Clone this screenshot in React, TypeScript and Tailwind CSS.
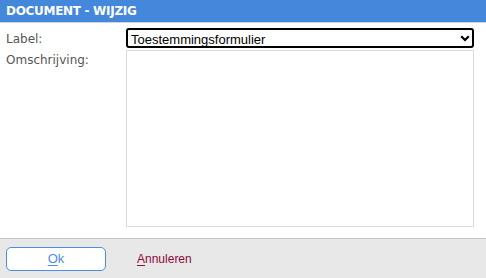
import { useState } from "react"

const App = () => {
    const [label, setLabel] = useState("Toestemmingsformulier")
    const [text, setText] = useState("")

    return (
        <main className="w-[486px] h-[278px] bg-white flex flex-col overflow-hidden">
            {/* Header */}
            <header className="h-[22px] bg-[#4388db] border-b border-[#d4d4d4] box-content flex items-center px-[6px]">
                <h1 className="text-white font-bold text-[12px] font-['DejaVu_Sans',sans-serif] tracking-[-0.3px]">DOCUMENT - WIJZIG</h1>
            </header>

            {/* Form */}
            <section className="flex-1 flex flex-col gap-[2px] pt-[5px] pl-[6px] pr-[12px]">
                <div className="flex items-center h-[20px]">
                    <label className="w-[120px] text-[12px] text-[#555] font-['DejaVu_Sans',sans-serif] pt-[1px]">Label:</label>
                    <div className="relative flex-1 h-[20px]">
                        <select value={label} onChange={(e) => setLabel(e.target.value)}
                            className="block appearance-none w-full h-[20px] border-2 border-black rounded-[3px] pl-[3px] text-[13px] text-black font-['Liberation_Sans',sans-serif] outline-none bg-white">
                            <option>Toestemmingsformulier</option>
                        </select>
                        <svg className="absolute right-[4px] top-[7px] pointer-events-none" width="10" height="7" viewBox="0 0 10 7">
                            <path d="M1.2 1.2 L5 5 L8.8 1.2" fill="none" stroke="black" strokeWidth="2.2" />
                        </svg>
                    </div>
                </div>
                <div className="flex">
                    <label className="w-[120px] text-[12px] text-[#555] font-['DejaVu_Sans',sans-serif] leading-[15px] pt-[3px]">Omschrijving:</label>
                    <textarea value={text} onChange={(e) => setText(e.target.value)}
                        className="block flex-1 h-[177px] border border-[#dcdcdc] resize-none outline-none" />
                </div>
            </section>

            {/* Footer */}
            <footer className="h-[40px] bg-[#e8e8e8] border-t border-[#c6c6c6] flex items-center px-[6px] gap-[31px]">
                <button className="w-[100px] h-[24px] border border-[#4a8fe3] rounded-[5px] bg-white text-[#4a8fe3] text-[13px] font-['Liberation_Sans',sans-serif]">
                    <span className="underline underline-offset-2">O</span>k
                </button>
                <a href="#" className="text-[#8c0a3c] text-[12px] font-['Liberation_Sans',sans-serif]">
                    <span className="underline underline-offset-2">A</span>nnuleren
                </a>
            </footer>
        </main>
    )
}

export default App
